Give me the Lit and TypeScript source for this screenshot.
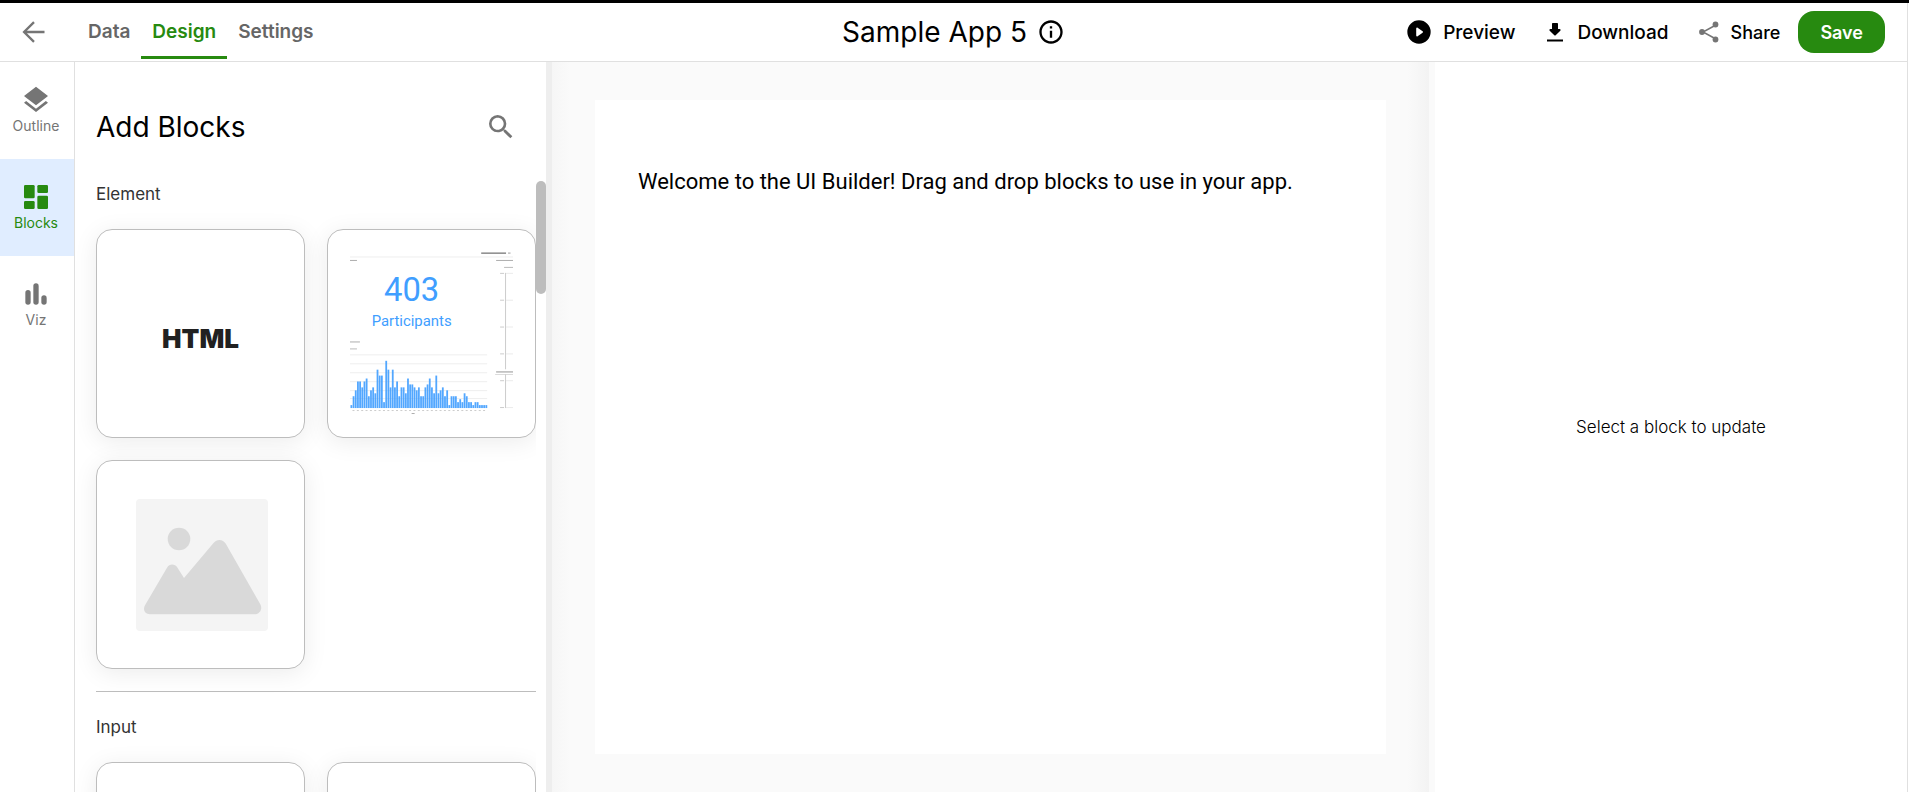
import { LitElement, html, css, svg } from "lit";
import { customElement, state } from "lit/decorators.js";

const BARS = [1, 4, 6, 9, 9, 7, 9, 10, 4, 6, 7, 5, 13, 11, 11, 2, 16, 13, 7, 13, 7, 9, 4, 7, 7, 5, 10, 8, 8, 7, 6, 7, 4, 4, 7, 8, 10, 7, 5, 11, 5, 6, 7, 4, 6, 1, 4, 4, 4, 2, 3, 2, 5, 4, 2, 2, 1, 2, 2, 1, 1, 1, 1];

const ICONS = {
  back: svg`<path d="M21 12H4M12 3.500 3.500 12l8.500 8.500" fill="none" stroke="currentColor" stroke-width="2"/>`,
  info: svg`<path d="M11 7h2v2h-2zm0 4h2v6h-2zm1-9C6.480 2 2 6.480 2 12s4.480 10 10 10 10-4.480 10-10S17.520 2 12 2zm0 18c-4.410 0-8-3.590-8-8s3.590-8 8-8 8 3.590 8 8-3.590 8-8 8z"/>`,
  play: svg`<path fill-rule="evenodd" d="M12 2a10 10 0 1 0 0 20 10 10 0 0 0 0-20zM9.600 9v6c0 .7.7 1 1.200.6l4.300-3c.4-.3.4-.9 0-1.200l-4.300-3c-.5-.4-1.200-.1-1.200.6z"/>`,
  download: svg`<path d="M16.600 9H15V4c0-.55-.45-1-1-1h-4c-.55 0-1 .45-1 1v5H7.400c-.9 0-1.330 1.080-.7 1.700l4.600 4.600c.4.4 1 .4 1.400 0l4.600-4.600c.63-.62.2-1.700-.7-1.700zM4 19.500v2h16v-2z"/>`,
  share: svg`<path d="M18 5.500 6 12l12 6.500" fill="none" stroke="currentColor" stroke-width="1.500"/><circle cx="18.500" cy="4.500" r="2.900"/><circle cx="5" cy="12" r="2.900"/><circle cx="18.500" cy="19.500" r="2.900"/>`,
  outline: svg`<path d="m11.990 18.540-7.370-5.730L3 14.070l9 7 9-7-1.630-1.270zM12 16l7.360-5.730L21 9l-9-7-9 7 1.630 1.270z"/>`,
  blocks: svg`<rect x="3" y="3" width="8" height="10" rx="1"/><rect x="13" y="3" width="8" height="6" rx="1"/><rect x="3" y="15" width="8" height="6" rx="1"/><rect x="13" y="11" width="8" height="10" rx="1"/>`,
  viz: svg`<rect x="4" y="9" width="4" height="11" rx="2"/><rect x="10" y="4" width="4" height="16" rx="2"/><rect x="16" y="13" width="4" height="7" rx="2"/>`,
  search: svg`<path d="M15.500 14h-.79l-.28-.27A6.470 6.470 0 0 0 16 9.500 6.500 6.500 0 1 0 9.500 16c1.610 0 3.090-.59 4.230-1.570l.27.28v.79l5 4.990L20.490 19zm-6 0C7.010 14 5 11.990 5 9.500S7.010 5 9.500 5 14 7.010 14 9.500 11.990 14 9.500 14z"/>`,
};

@customElement("app-root")
export class AppRoot extends LitElement {
  @state() private tab = "Design";
  @state() private section = "Blocks";

  static styles = css`
    :host {
      display: flex;
      flex-direction: column;
      height: 100vh;
      box-sizing: border-box;
      border-top: 3px solid #000;
      font-family: Inter, "Liberation Sans", sans-serif;
      color: #000;
      background: #fff;
      overflow: hidden;
    }
    * { box-sizing: border-box; }
    button {
      font: inherit;
      color: inherit;
      background: none;
      border: 0;
      padding: 0;
      cursor: pointer;
    }
    a { color: inherit; text-decoration: none; }
    h1, h2, h3, p { margin: 0; font-weight: 400; }
    .icon { display: block; fill: currentColor; flex: none; }

    .frame {
      flex: 1;
      min-height: 0;
      display: flex;
      flex-direction: column;
      margin-right: 1px;
      border-right: 1px solid #e0e0e0;
    }
    .header {
      display: grid;
      grid-template-columns: 1fr auto 1fr;
      align-items: center;
      height: 59px;
      flex: none;
      border-bottom: 1px solid #e0e0e0;
    }
    .nav { display: flex; align-items: stretch; height: 58px; }
    .back { color: #757575; padding: 0 20px; margin-right: 9px; }
    .tab {
      display: flex;
      align-items: center;
      padding: 3px 11px 0;
      margin-bottom: 2px;
      border-bottom: 3px solid transparent;
      font-size: 19px;
      font-weight: 600;
      color: #666;
    }
    .tab.active { color: #278a10; border-bottom-color: #278a10; }
    .title { display: flex; align-items: center; gap: 10px; }
    .title h1 { font-size: 28px; line-height: 36px; }
    .actions { display: flex; align-items: center; justify-content: flex-end; padding-right: 22px; }
    .action { display: flex; align-items: center; gap: 10px; font-size: 19px; font-weight: 500; margin-right: 28px; }
    .action.share { font-size: 18px; margin-right: 18px; }
    .share .icon { color: #757575; }
    .save {
      height: 42px;
      padding: 0 22px;
      border-radius: 16px;
      background: #278a10;
      color: #fff;
      font-size: 18px;
      font-weight: 600;
    }

    .body { flex: 1; min-height: 0; display: flex; }
    .rail { flex: 0 0 75px; border-right: 1px solid #e0e0e0; display: flex; flex-direction: column; }
    .rail-item {
      height: 97px;
      display: flex;
      flex-direction: column;
      align-items: center;
      justify-content: center;
      padding: 0 2px 2px 0;
      font-size: 14px;
      line-height: 20px;
      color: #757575;
    }
    .rail-item.active { background: #e0edff; color: #278a10; }

    .panel { flex: 0 0 471px; display: flex; flex-direction: column; background: #fff; }
    .panel-head {
      display: flex;
      align-items: flex-start;
      justify-content: space-between;
      padding: 49px 29px 0 21px;
      height: 119px;
    }
    .panel-head h2 { font-size: 28px; line-height: 32px; }
    .search { color: #757575; }
    .scroller { flex: 1; min-height: 0; display: flex; }
    .list { flex: 1; min-width: 0; overflow: hidden; padding: 3px 0 0 21px; }
    .track { flex: 0 0 10px; }
    .thumb { height: 113px; border-radius: 5px; background: #bdbdbd; }
    .group h3 { font-size: 17px; line-height: 20px; color: #333; }
    .group + .group { border-top: 1px solid #bdbdbd; margin-top: 22px; padding-top: 25px; }
    .cards { display: grid; grid-template-columns: 1fr 1fr; gap: 22px; margin-top: 25px; }
    .card {
      aspect-ratio: 1;
      display: flex;
      align-items: center;
      justify-content: center;
      border: 1px solid #bdbdbd;
      border-radius: 16px;
      background: #fff;
      padding: 22px;
      box-shadow: 0 4px 24px rgba(0, 0, 0, 0.08);
    }
    .wordmark { font-weight: 900; font-size: 26px; color: #212121; padding-top: 10px; }
    .preview { width: 100%; height: 100%; display: block; }
    .preview text { font-family: Roboto, sans-serif; }

    .split { flex: 0 0 6px; background: #fafafa; }
    .split.left { background: #eee; }
    .workspace {
      flex: 1;
      min-width: 0;
      display: flex;
      padding: 38px 43px;
      background: linear-gradient(90deg, #f6f6f6, #fafafa 18px, #fafafa calc(100% - 22px), #f3f3f3);
    }
    .page { flex: 1; background: #fff; padding: 66px 43px; }
    .page p { font-family: Roboto, sans-serif; font-size: 22px; line-height: 32px; }
    .inspector {
      flex: 0 0 472px;
      display: flex;
      align-items: center;
      justify-content: center;
      font-size: 17px;
    }
    .inspector p { font-weight: 300; }
  `;

  private icon(name: keyof typeof ICONS, size: number) {
    return html`<svg class="icon" width=${size} height=${size} viewBox="0 0 24 24" aria-hidden="true">${ICONS[name]}</svg>`;
  }

  private dashboard() {
    return html`<svg class="preview" viewBox="0 0 164 164" role="img" aria-label="Participants dashboard">
      <g fill="#777">
        <rect x="132" y="0.500" width="25" height="1.300"/><rect x="159" y="0.500" width="2.500" height="1.200" opacity=".6"/>
        <rect x="0" y="8" width="7" height="1" opacity=".6"/><rect x="147" y="8" width="17" height="1" opacity=".6"/>
        <rect x="155" y="15" width="9" height="1" opacity=".5"/>
        <rect x="0" y="90" width="10" height="1" opacity=".6"/><rect x="0" y="97" width="7" height="1" opacity=".5"/>
        <rect x="147" y="120" width="17" height="1.300" opacity=".6"/><rect x="62" y="162" width="3" height="1" opacity=".6"/>
      </g>
      <g fill="#eee">
        <rect x="0" y="4.500" width="164" height="1"/>
        ${[103, 112, 121, 130, 139, 147].map((y) => svg`<rect x="0" y=${y} width="138" height="1"/>`)}
      </g>
      <g fill="#ccc">
        <rect x="156" y="21" width="1" height="97"/><rect x="156" y="123" width="1" height="34"/><rect x="146" y="123" width="18" height=".7"/>
        ${[21, 48, 75, 102, 129, 156].map((y) => svg`<rect x="151" y=${y} width="4" height="1"/><rect x="157" y=${y} width="7" height="1" opacity=".4"/>`)}
        ${Array.from({ length: 31 }, (_, i) => svg`<rect x=${2.500 + i * 4.380} y="159" width="2" height="1"/>`)}
      </g>
      <g fill="#409eff" opacity=".9">
        ${BARS.map((v, i) => svg`<rect x=${0.500 + i * 2.190} y=${157 - v * 2.970} width="1.800" height=${v * 2.970}/>`)}
      </g>
      <text x="62" y="49" text-anchor="middle" font-size="33" fill="#409eff">403</text>
      <text x="62" y="74" text-anchor="middle" font-size="15" fill="#409eff">Participants</text>
    </svg>`;
  }

  private placeholder() {
    return html`<svg width="134" height="132" viewBox="-2 0 134 132" role="img" aria-label="Image">
      <rect width="132" height="132" rx="4" fill="#f4f4f4"/>
      <circle cx="43" cy="40" r="11.300" fill="#d9d9d9"/>
      <path fill="#d9d9d9" d="M14 115.300c-5 0-7.500-4.500-5-9L31 68.800c2.300-4.300 8-4.300 10.500 0L48 79 77.500 44c3.500-4.300 9.500-4 12.300.8l34.500 60.500c2.700 4.700-.8 10-5.500 10z"/>
    </svg>`;
  }

  render() {
    return html`
      <div class="frame">
        <header class="header">
          <nav class="nav">
            <button class="back" aria-label="Back">${this.icon("back", 28)}</button>
            ${["Data", "Design", "Settings"].map(
              (t) => html`<a href="#" class="tab ${this.tab === t ? "active" : ""}" @click=${() => (this.tab = t)}>${t}</a>`
            )}
          </nav>
          <div class="title">
            <h1>Sample App 5</h1>
            <button aria-label="About this app">${this.icon("info", 28)}</button>
          </div>
          <div class="actions">
            <button class="action">${this.icon("play", 28)}Preview</button>
            <button class="action">${this.icon("download", 24)}Download</button>
            <button class="action share">${this.icon("share", 24)}Share</button>
            <button class="save">Save</button>
          </div>
        </header>
        <div class="body">
          <nav class="rail">
            ${([["outline", "Outline"], ["blocks", "Blocks"], ["viz", "Viz"]] as const).map(
              ([icon, name]) => html`<button
                class="rail-item ${this.section === name ? "active" : ""}"
                @click=${() => (this.section = name)}
              >${this.icon(icon, 32)}${name}</button>`
            )}
          </nav>
          <aside class="panel">
            <div class="panel-head">
              <h2>Add Blocks</h2>
              <button class="search" aria-label="Search blocks">${this.icon("search", 32)}</button>
            </div>
            <div class="scroller">
              <div class="list">
                <section class="group">
                  <h3>Element</h3>
                  <div class="cards">
                    <button class="card"><span class="wordmark">HTML</span></button>
                    <button class="card">${this.dashboard()}</button>
                    <button class="card">${this.placeholder()}</button>
                  </div>
                </section>
                <section class="group">
                  <h3>Input</h3>
                  <div class="cards">
                    <button class="card" aria-label="Input block"></button>
                    <button class="card" aria-label="Input block"></button>
                  </div>
                </section>
              </div>
              <div class="track"><div class="thumb"></div></div>
            </div>
          </aside>
          <div class="split left"></div>
          <main class="workspace">
            <div class="page"><p>Welcome to the UI Builder! Drag and drop blocks to use in your app.</p></div>
          </main>
          <div class="split"></div>
          <aside class="inspector"><p>Select a block to update</p></aside>
        </div>
      </div>
    `;
  }
}
